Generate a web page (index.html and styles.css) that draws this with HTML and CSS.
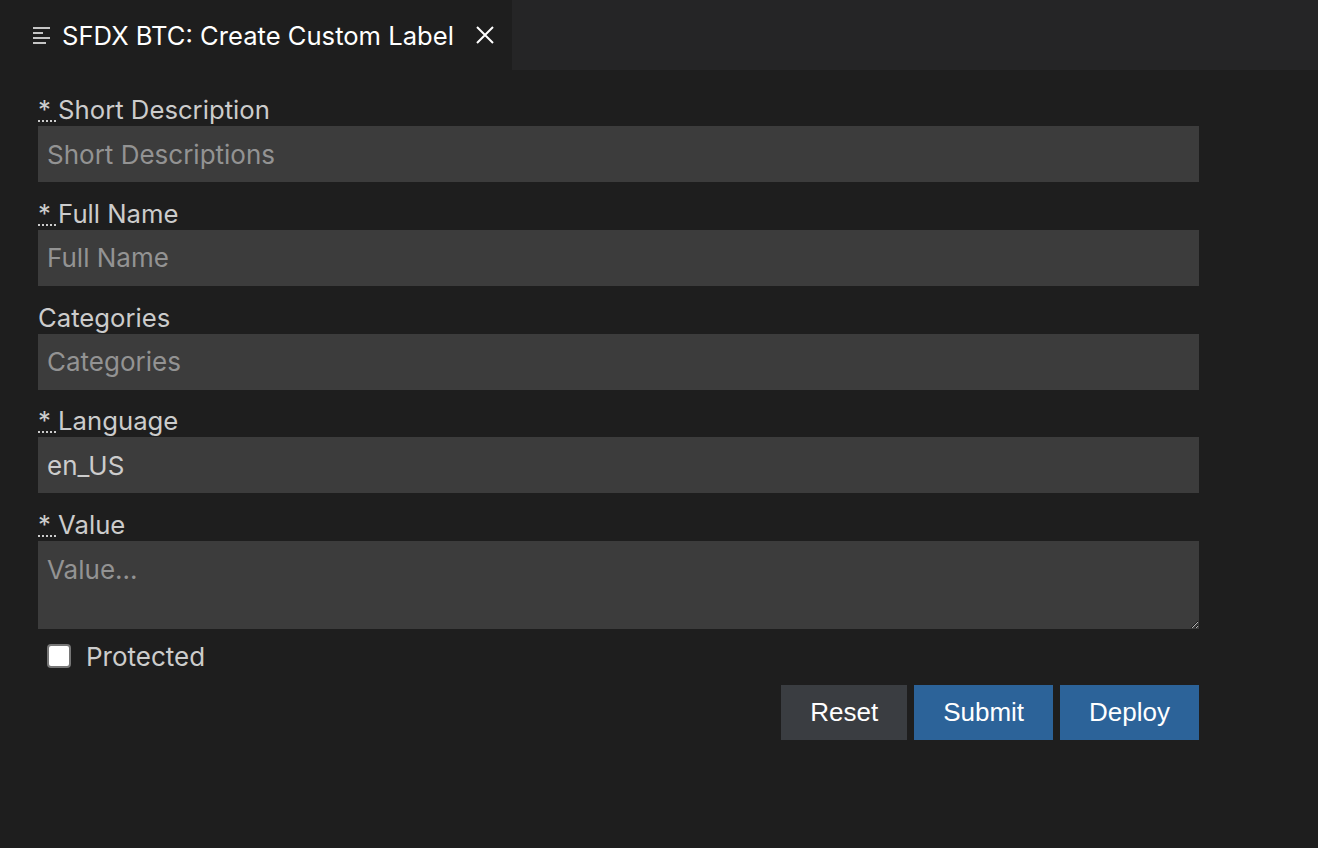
FILE: index.html
```html
<!DOCTYPE html>
<html lang="en">
<head>
<meta charset="utf-8">
<title>SFDX BTC: Create Custom Label</title>
<link rel="stylesheet" href="styles.css">
</head>
<body>
<div class="tabbar">
  <div class="tab">
    <svg class="tab-icon" width="18" height="18" viewBox="0 0 18 18" aria-hidden="true">
      <rect x="0" y="0" width="17" height="2" fill="#c5c5c5"/>
      <rect x="0" y="5" width="10" height="2" fill="#c5c5c5"/>
      <rect x="0" y="10" width="17" height="2" fill="#c5c5c5"/>
      <rect x="0" y="15" width="13" height="2" fill="#c5c5c5"/>
    </svg>
    <span class="tab-title">SFDX BTC: Create Custom Label</span>
    <svg class="tab-close" width="18" height="18" viewBox="0 0 18 18" aria-hidden="true">
      <path d="M1 1 L17 17 M17 1 L1 17" stroke="#ffffff" stroke-width="2" fill="none"/>
    </svg>
  </div>
  <div class="tab-rest"></div>
</div>
<form class="form">
  <div class="field">
    <label class="label"><abbr class="req" title="required">* </abbr>Short Description</label>
    <input class="input" type="text" placeholder="Short Descriptions">
  </div>
  <div class="field">
    <label class="label"><abbr class="req" title="required">* </abbr>Full Name</label>
    <input class="input" type="text" placeholder="Full Name">
  </div>
  <div class="field">
    <label class="label">Categories</label>
    <input class="input" type="text" placeholder="Categories">
  </div>
  <div class="field">
    <label class="label"><abbr class="req" title="required">* </abbr>Language</label>
    <input class="input" type="text" value="en_US">
  </div>
  <div class="field">
    <label class="label"><abbr class="req" title="required">* </abbr>Value</label>
    <textarea class="input textarea" placeholder="Value..."></textarea>
  </div>
  <label class="check-row">
    <span class="checkbox"></span>
    <span class="check-label">Protected</span>
  </label>
  <div class="actions">
    <button type="button" class="btn btn-secondary">Reset</button>
    <button type="button" class="btn btn-primary">Submit</button>
    <button type="button" class="btn btn-primary">Deploy</button>
  </div>
</form>
</body>
</html>
```
FILE: styles.css
```css
html, body {
  margin: 0;
  padding: 0;
  background: #1e1e1e;
  height: 100%;
}
body {
  font-family: Inter, "Noto Sans", sans-serif;
  color: #cccccc;
  overflow: hidden;
}
.tabbar {
  display: flex;
  height: 70px;
  background: #252526;
}
.tab {
  width: 512px;
  background: #1e1e1e;
  display: flex;
  align-items: center;
  box-sizing: border-box;
  padding-left: 33px;
}
.tab-icon {
  flex: none;
  margin-top: 2px;
}
.tab-title {
  margin-left: 11px;
  font-size: 25.6px;
  color: #ffffff;
}
.tab-close {
  margin-left: 22px;
  flex: none;
}
.tab-rest {
  flex: 1;
}
.form {
  width: 1161px;
  margin: 26px 0 0 38px;
  display: flex;
  flex-direction: column;
  gap: 17.75px;
}
.field {
  display: flex;
  flex-direction: column;
}
.label {
  font-size: 25.7px;
  line-height: 27px;
  height: 27px;
  padding-bottom: 3px;
  color: #cccccc;
  white-space: nowrap;
}
.req {
  text-decoration: none;
  background-image: linear-gradient(to right, #cccccc 2px, transparent 2px);
  background-size: 4px 2px;
  background-repeat: repeat-x;
  background-position: 0 calc(100% - 3px);
}
.input {
  box-sizing: border-box;
  height: 56px;
  width: 100%;
  background: #3c3c3c;
  border: none;
  outline: none;
  padding: 0 9px;
  font-family: Inter, "Noto Sans", sans-serif;
  font-size: 26px;
  color: #cccccc;
}
.input::placeholder {
  color: #939393;
}
.textarea {
  height: 88px;
  padding-top: 13px;
  resize: vertical;
  display: block;
}
.check-row {
  display: flex;
  align-items: center;
  height: 24px;
  margin-top: -3px;
  padding-left: 9px;
}
.checkbox {
  box-sizing: border-box;
  width: 24px;
  height: 24px;
  background: #ffffff;
  border: 2px solid #767676;
  border-radius: 4px;
  flex: none;
}
.check-label {
  margin-left: 15px;
  font-size: 26px;
  line-height: 30px;
  margin-top: 3px;
  color: #cccccc;
}
.actions {
  display: flex;
  justify-content: flex-end;
  gap: 7px;
  margin-top: -1px;
}
.btn {
  height: 55px;
  padding: 0 29px;
  border: none;
  font-family: "Liberation Sans", Arial, sans-serif;
  font-size: 26px;
  color: #ffffff;
  cursor: pointer;
}
.btn-secondary {
  background: #3a3d41;
}
.btn-primary {
  background: #2c6399;
}
```
